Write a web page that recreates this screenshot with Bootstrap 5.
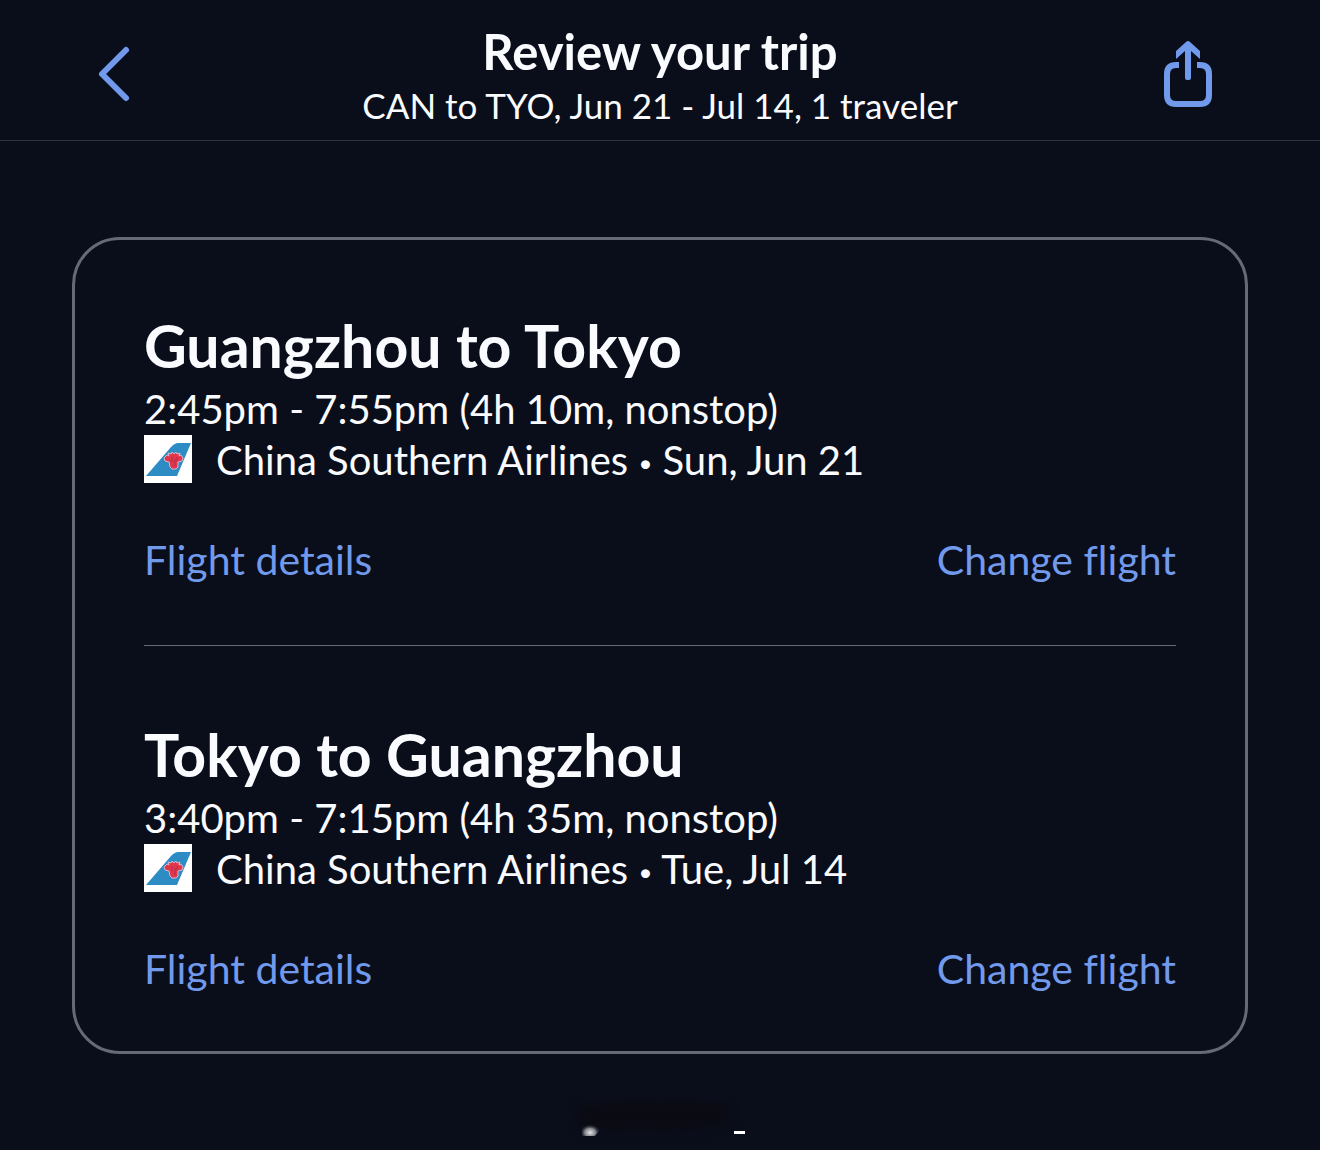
<!DOCTYPE html>
<html lang="en">
<head>
<meta charset="utf-8">
<meta name="viewport" content="width=device-width, initial-scale=1">
<title>Review your trip</title>
<link rel="stylesheet" href="https://cdn.jsdelivr.net/npm/bootstrap@5.3.0/dist/css/bootstrap.min.css">
<style>
  body { background: #0a0e1b; color: #fafbff; font-family: Lato, "Open Sans", sans-serif; font-variant-ligatures: none; }
  .trip-header { height: 141px; padding: 2px 96px 0; border-bottom: 1px solid #2f3340; }
  .icon-button { width: 60px; height: 72px; color: #719aec; }
  .trip-title { font-size: 49px; line-height: 60px; font-weight: 700; }
  .trip-summary { font-size: 35px; line-height: 48px; }
  .trip-main { padding: 96px 72px 44px; }
  .trip-card { border: 3px solid #676a74; border-radius: 48px; padding: 0 69px; }
  .leg { padding: 72px 0 60px; }
  .leg + .leg { border-top: 1px solid #676a74; padding: 75px 0 57px; }
  .leg-title { font-size: 59px; line-height: 68px; margin-bottom: 4px; font-weight: 700; }
  .leg-line { font-size: 40px; line-height: 51px; }
  .leg-links { font-size: 41px; line-height: 51px; margin-top: 48px; }
  .leg-links a { color: #719aec; }
  .airline-logo { width: 48px; height: 48px; margin-right: 24px; }
  .dot { font-size: 24px; line-height: 24px; vertical-align: 3px; }
  .sheet-edge { width: 180px; height: 40px; }
</style>
</head>
<body>
<header class="trip-header d-flex align-items-center justify-content-between">
  <button type="button" class="icon-button btn p-0 border-0 d-flex" aria-label="Back">
    <svg width="60" height="72" viewBox="0 0 60 72" fill="none" stroke="currentColor" stroke-width="6" stroke-linecap="round" stroke-linejoin="round" aria-hidden="true"><path d="M30 15 6 39 30 63"/></svg>
  </button>
  <div class="text-center pt-2">
    <h1 class="trip-title mb-0">Review your trip</h1>
    <p class="trip-summary mb-0">CAN to TYO, Jun 21 - Jul 14, 1 traveler</p>
  </div>
  <button type="button" class="icon-button btn p-0 border-0 d-flex" aria-label="Share">
    <svg width="60" height="72" viewBox="0 0 60 72" aria-hidden="true">
      <path d="M15 30H12Q3 30 3 39V60Q3 69 12 69H36Q45 69 45 60V39Q45 30 36 30H33" fill="none" stroke="currentColor" stroke-width="6"/>
      <path d="M12 16 22 7Q24 5 26 7L36 16V24L27 16V43Q27 45 25 45H23Q21 45 21 43V16L12 24Z" fill="currentColor"/>
    </svg>
  </button>
</header>

<main class="trip-main">
  <div class="trip-card">
    <section class="leg">
      <h2 class="leg-title">Guangzhou to Tokyo</h2>
      <p class="leg-line mb-0">2:45pm - 7:55pm (4h 10m, nonstop)</p>
      <div class="leg-line d-flex">
        <svg class="airline-logo flex-shrink-0" viewBox="0 0 48 48" role="img" aria-label="China Southern Airlines">
          <rect width="48" height="48" fill="#fff"/>
          <path d="M2 41 27 12Q31 8 34 8H47L33 41Z" fill="#2e8cc4"/>
          <g id="kapok"><path d="M25 27 21 26 20 23 23 20 25 21 24 18 27 19 28 17 30 19 32 17 33 19 36 18 35 21 37 20 39 23 38 26 34 27V32L32 34H28L26 32Z" fill="#e2364b" stroke="#d9b3cc" stroke-width="1" stroke-linejoin="round"/><path d="M28 22V27M31 24V31M33 22V26" stroke="#b12c50"/></g>
        </svg>
        <span>China Southern Airlines <span class="dot">•</span> Sun, Jun 21</span>
      </div>
      <div class="leg-links d-flex justify-content-between">
        <a href="#" class="text-decoration-none">Flight details</a>
        <a href="#" class="text-decoration-none">Change flight</a>
      </div>
    </section>
    <section class="leg">
      <h2 class="leg-title">Tokyo to Guangzhou</h2>
      <p class="leg-line mb-0">3:40pm - 7:15pm (4h 35m, nonstop)</p>
      <div class="leg-line d-flex">
        <svg class="airline-logo flex-shrink-0" viewBox="0 0 48 48" role="img" aria-label="China Southern Airlines">
          <rect width="48" height="48" fill="#fff"/>
          <path d="M2 41 27 12Q31 8 34 8H47L33 41Z" fill="#2e8cc4"/>
          <use href="#kapok"/>
        </svg>
        <span>China Southern Airlines <span class="dot">•</span> Tue, Jul 14</span>
      </div>
      <div class="leg-links d-flex justify-content-between">
        <a href="#" class="text-decoration-none">Flight details</a>
        <a href="#" class="text-decoration-none">Change flight</a>
      </div>
    </section>
  </div>
</main>

<footer class="d-flex justify-content-center">
  <svg class="sheet-edge" viewBox="0 0 180 40" aria-hidden="true">
    <defs>
      <filter id="smudge" color-interpolation-filters="sRGB" x="-20%" y="-60%" width="140%" height="220%"><feGaussianBlur stdDeviation="4"/></filter>
      <radialGradient id="spot" cx=".45" cy=".75" r=".6"><stop offset="0" stop-color="#e4e4e8"/><stop offset=".5" stop-color="#85868d"/><stop offset="1" stop-color="#0a0e1b" stop-opacity="0"/></radialGradient>
    </defs>
    <path d="M8 8Q80 0 158 6V28Q90 34 8 30Z" fill="#0a0a10" fill-opacity=".8" filter="url(#smudge)"/>
    <path d="M12 38V30Q14 24 21 24 30 26 30 32L25 38Z" fill="url(#spot)"/>
    <rect x="164" y="33" width="11" height="3" fill="#fff"/>
  </svg>
</footer>
<script src="https://cdn.jsdelivr.net/npm/bootstrap@5.3.0/dist/js/bootstrap.bundle.min.js"></script>
</body>
</html>
